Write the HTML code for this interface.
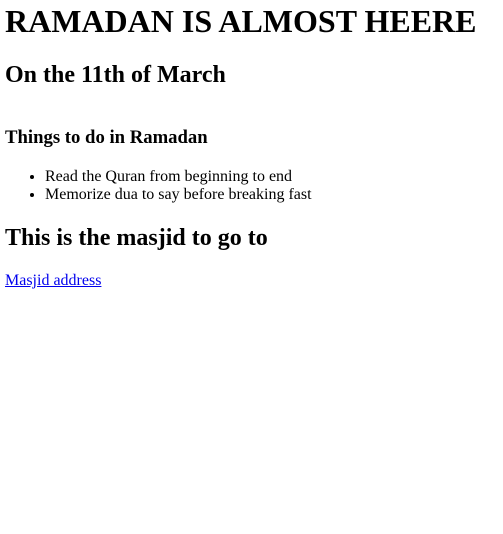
<!DOCTYPE html>
<html>
<head>
<meta charset="utf-8">
<style>
html,body{background:#fff;}
body{margin:3px 8px 8px 5px;font-family:"Liberation Serif",serif;color:#000;font-size:16px;}
h1{font-size:32px;margin:0 0 21.44px 0;line-height:37px;}
h2{font-size:24px;margin:19.92px 0;line-height:28px;}
h3{font-size:18.72px;margin:18.72px 0;line-height:22px;}
ul{margin:16px 0;padding-left:40px;}
li{line-height:18px;}
p{margin:16px 0;line-height:18px;}
a{color:#0000ee;}
</style>
</head>
<body>
<h1>RAMADAN IS ALMOST HEERE</h1>
<h2>On the 11th of March</h2>
<h3 style="margin-top:38px">Things to do in Ramadan</h3>
<ul>
<li>Read the Quran from beginning to end</li>
<li>Memorize dua to say before breaking fast</li>
</ul>
<h2>This is the masjid to go to</h2>
<p><a href="#">Masjid address</a></p>
</body>
</html>
